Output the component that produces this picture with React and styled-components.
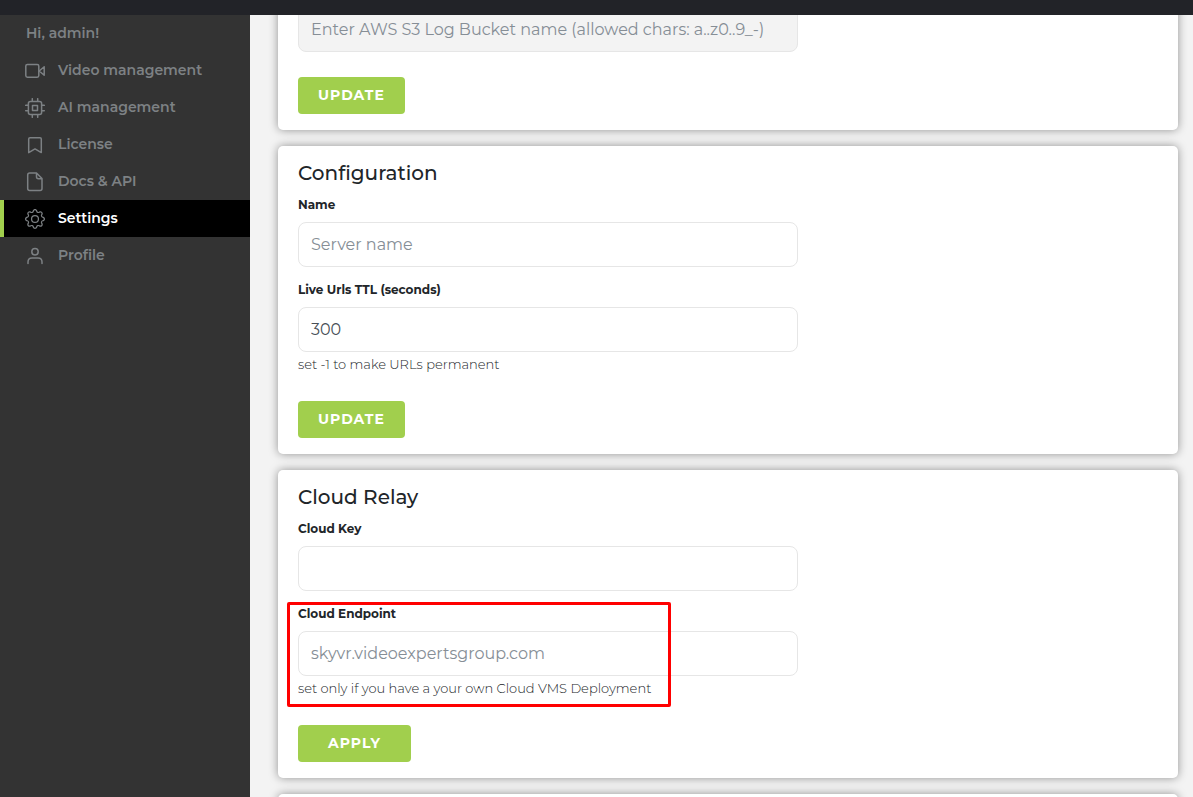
import React, { useState } from "react";
import styled, { createGlobalStyle } from "styled-components";
import { BsGear } from "react-icons/bs";

const GlobalStyle = createGlobalStyle`
  * {
    box-sizing: border-box;
  }
  body {
    margin: 0;
    background-color: #f3f3f3;
    color: #212529;
    font-family: Montserrat, Inter, "Open Sans", sans-serif;
    font-variant-ligatures: none;
  }
`;

//Layout styles

const Page = styled.div`
  display: flex;
  flex-direction: column;
  height: 100vh;
  overflow: hidden;
`;

const TopBar = styled.header`
  flex: 0 0 15px;
  background-color: #222328;
`;

const Body = styled.div`
  display: flex;
  flex: 1;
  min-height: 0;
`;

const Content = styled.main`
  flex: 1;
  min-width: 0;
  overflow: hidden;
  padding: 0 15px 0 28px;
`;

const Panels = styled.div`
  display: flex;
  flex-direction: column;
  gap: 16px;
  margin-top: -24px;
`;

//Sidebar styles

const Sidebar = styled.nav`
  flex: 0 0 250px;
  background-color: #333;
`;

const Greeting = styled.div`
  padding-left: 26px;
  color: #7d8184;
  font-size: 14px;
  font-weight: 600;
  line-height: 37px;
`;

const NavLink = styled.a`
  display: flex;
  align-items: center;
  gap: 13px;
  height: 37px;
  padding: 0 0 2px 21px;
  border-left: 4px solid ${(props) => (props.$active ? "#a1cf4d" : "transparent")};
  background-color: ${(props) => (props.$active ? "#000" : "transparent")};
  color: ${(props) => (props.$active ? "#fff" : "#7d8184")};
  font-size: 14px;
  font-weight: 600;
  text-decoration: none;

  svg {
    margin-top: 3px;
    color: #7d8184;
  }
`;

//Form styles

const Card = styled.form`
  padding: 16px 20px;
  border-radius: 5px;
  background-color: #fff;
  box-shadow: 0 0 10px rgba(0, 0, 0, 0.4);
`;

const CardTitle = styled.h2`
  margin: 0 0 11px;
  font-size: 20px;
  font-weight: 500;
  line-height: 22px;
`;

const Field = styled.div`
  position: relative;
  display: flex;
  flex-direction: column;
  max-width: 500px;
  margin-bottom: ${(props) => (props.$last ? "25px" : "13px")};
`;

const Label = styled.label`
  margin-bottom: 7px;
  font-size: 12px;
  font-weight: 700;
  line-height: 20px;
`;

const Input = styled.input`
  height: 45px;
  padding: 0 12px;
  border: 1px solid #e6e6e6;
  border-radius: 8px;
  background-color: #fff;
  color: #495057;
  font-family: inherit;
  font-size: 16px;
  font-weight: 400;

  &::placeholder {
    color: #868e96;
    opacity: 1;
  }

  &:disabled {
    background-color: #f3f3f3;
  }
`;

const Help = styled.small`
  margin-top: 1px;
  font-size: 13px;
  font-weight: 300;
  line-height: 23px;
`;

const Button = styled.button`
  height: 37px;
  padding: 0 ${(props) => (props.$wide ? "30px" : "20px")} 2px;
  border: none;
  border-radius: 4px;
  background-color: #a1cf4d;
  color: #fff;
  font-family: inherit;
  font-size: 14px;
  font-weight: 700;
  letter-spacing: 1px;
  cursor: pointer;
`;

const Highlight = styled.div`
  position: absolute;
  inset: -2px 127px -7px -11px;
  border: 3px solid #f00;
  border-radius: 2px;
  pointer-events: none;
`;

const Icon = ({ children }) => (
  <svg
    width="20"
    height="20"
    viewBox="0 0 20 20"
    fill="none"
    stroke="currentColor"
    strokeWidth="1.5"
    strokeLinecap="round"
    strokeLinejoin="round"
    aria-hidden="true"
  >
    {children}
  </svg>
);

const links = [
  {
    title: "Video management",
    icon: (
      <Icon>
        <rect x="0.8" y="3.5" width="13" height="12.7" rx="1.6" />
        <path d="M14.2 10l5-4.3v8.6z" />
      </Icon>
    ),
  },
  {
    title: "AI management",
    icon: (
      <Icon>
        <rect x="3.4" y="3.4" width="13.2" height="13.2" rx="2" />
        <rect x="7.5" y="7.5" width="5" height="5" />
        <path d="M7.3 3V.7M12.7 3V.7M7.3 19.3V17M12.7 19.3V17M3 7.3H.7M3 12.7H.7M19.3 7.3H17M19.3 12.7H17" />
      </Icon>
    ),
  },
  {
    title: "License",
    icon: (
      <Icon>
        <path d="M3.7 17.6V4q0-1.3 1.3-1.3h10q1.3 0 1.3 1.3v13.6L10 13.9z" />
      </Icon>
    ),
  },
  {
    title: "Docs & API",
    icon: (
      <Icon>
        <path d="M11.5 1H4.7q-2 0-2 2v13.6q0 2 2 2H15q2 0 2-2V6.5zM11.5 1v3.8q0 2 2 2H17" />
      </Icon>
    ),
  },
  {
    title: "Settings",
    icon: <BsGear size={20} aria-hidden="true" />,
  },
  {
    title: "Profile",
    icon: (
      <Icon>
        <circle cx="10" cy="5.8" r="3.2" />
        <path d="M3 17.4V16q0-4 4-4h6q4 0 4 4v1.4" />
      </Icon>
    ),
  },
];

const App = () => {
  const [ttl, setTtl] = useState("300");

  return (
    <Page>
      <GlobalStyle />
      <TopBar />
      <Body>
        <Sidebar>
          <Greeting>Hi, admin!</Greeting>
          {links.map(({ title, icon }) => (
            <NavLink key={title} href="#" $active={title === "Settings"}>
              {icon}
              {title}
            </NavLink>
          ))}
        </Sidebar>
        <Content>
          <Panels>
            <Card>
              <Field $last>
                <Input
                  aria-label="AWS S3 Log Bucket name"
                  placeholder="Enter AWS S3 Log Bucket name (allowed chars: a..z0..9_-)"
                  disabled
                />
              </Field>
              <Button type="button">UPDATE</Button>
            </Card>
            <Card>
              <CardTitle>Configuration</CardTitle>
              <Field>
                <Label htmlFor="name">Name</Label>
                <Input id="name" placeholder="Server name" />
              </Field>
              <Field $last>
                <Label htmlFor="ttl">Live Urls TTL (seconds)</Label>
                <Input id="ttl" value={ttl} onChange={(e) => setTtl(e.target.value)} />
                <Help>set -1 to make URLs permanent</Help>
              </Field>
              <Button type="button">UPDATE</Button>
            </Card>
            <Card>
              <CardTitle>Cloud Relay</CardTitle>
              <Field>
                <Label htmlFor="key">Cloud Key</Label>
                <Input id="key" />
              </Field>
              <Field $last>
                <Label htmlFor="endpoint">Cloud Endpoint</Label>
                <Input id="endpoint" placeholder="skyvr.videoexpertsgroup.com" />
                <Help>set only if you have a your own Cloud VMS Deployment</Help>
                <Highlight />
              </Field>
              <Button type="button" $wide>
                APPLY
              </Button>
            </Card>
            <Card />
          </Panels>
        </Content>
      </Body>
    </Page>
  );
};

export default App;
